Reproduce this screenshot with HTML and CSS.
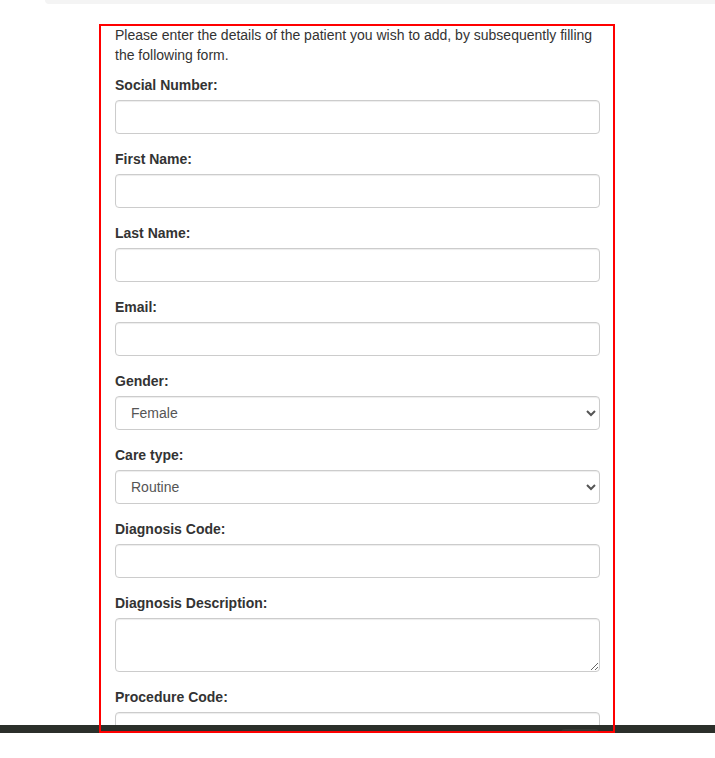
FILE: index.html
```html
<!DOCTYPE html>
<html lang="en">
<head>
<meta charset="utf-8">
<title>Add Patient</title>
<link rel="stylesheet" href="styles.css">
</head>
<body>
<div class="page">
  <div class="topbar"></div>
  <main class="frame">
    <p class="intro">Please enter the details of the patient you wish to add, by subsequently filling the following form.</p>
    <form class="form">
      <div class="form-group">
        <label class="label" for="ssn">Social Number:</label>
        <input class="control" id="ssn" type="text">
      </div>
      <div class="form-group">
        <label class="label" for="fname">First Name:</label>
        <input class="control" id="fname" type="text">
      </div>
      <div class="form-group">
        <label class="label" for="lname">Last Name:</label>
        <input class="control" id="lname" type="text">
      </div>
      <div class="form-group">
        <label class="label" for="email">Email:</label>
        <input class="control" id="email" type="email">
      </div>
      <div class="form-group">
        <label class="label" for="gender">Gender:</label>
        <select class="control select" id="gender">
          <option>Female</option>
          <option>Male</option>
        </select>
      </div>
      <div class="form-group">
        <label class="label" for="care">Care type:</label>
        <select class="control select" id="care">
          <option>Routine</option>
          <option>Urgent</option>
        </select>
      </div>
      <div class="form-group">
        <label class="label" for="dcode">Diagnosis Code:</label>
        <input class="control" id="dcode" type="text">
      </div>
      <div class="form-group">
        <label class="label" for="ddesc">Diagnosis Description:</label>
        <textarea class="control textarea" id="ddesc" rows="2"></textarea>
      </div>
      <div class="form-group">
        <label class="label" for="pcode">Procedure Code:</label>
        <input class="control" id="pcode" type="text">
      </div>
    </form>
  </main>
  <div class="footer-bar"><span class="footer-btn"></span></div>
</div>
</body>
</html>
```

FILE: styles.css
```css
* {
  box-sizing: border-box;
}

html, body {
  margin: 0;
  padding: 0;
  background: #ffffff;
}

body {
  font-family: "Liberation Sans", Arial, Helvetica, sans-serif;
  font-size: 14px;
  line-height: 20px;
  color: #333333;
}

.page {
  position: relative;
  width: 715px;
  height: 758px;
  overflow: hidden;
}

.topbar {
  margin-left: 45px;
  height: 4px;
  background: #f4f4f4;
  border-bottom-left-radius: 4px;
}

.frame {
  position: relative;
  display: block;
  margin: 20px 0 0 99px;
  width: 516px;
  height: 709px;
  padding: 1px 15px 0 16px;
  overflow: hidden;
}

.frame::after {
  content: "";
  position: absolute;
  inset: 0;
  border: 2px solid #ff0000;
  z-index: 5;
  pointer-events: none;
}

.intro {
  margin: 0 0 10px;
}

.form {
  display: flex;
  flex-direction: column;
  gap: 15px;
}

.form-group {
  display: flex;
  flex-direction: column;
}

.label {
  display: block;
  font-weight: bold;
  margin-bottom: 5px;
  line-height: 20px;
}

.control {
  display: block;
  width: 485px;
  height: 34px;
  padding: 6px 12px;
  font-family: inherit;
  font-size: 14px;
  line-height: 20px;
  color: #555555;
  background: #ffffff;
  border: 1px solid #cccccc;
  border-radius: 4px;
  box-shadow: inset 0 1px 1px rgba(0, 0, 0, 0.075);
  margin: 0;
}

.select {
  padding: 6px 8px 6px 11px;
}

.textarea {
  height: 54px;
  resize: vertical;
}

.footer-bar {
  position: absolute;
  left: 0;
  right: 0;
  top: 725px;
  height: 8px;
  background: #2b2f2a;
  overflow: hidden;
  z-index: 3;
}

.footer-btn {
  position: absolute;
  left: 561px;
  top: 4px;
  width: 38px;
  height: 4px;
  background: #363a35;
  border-radius: 4px 4px 0 0;
}
```
